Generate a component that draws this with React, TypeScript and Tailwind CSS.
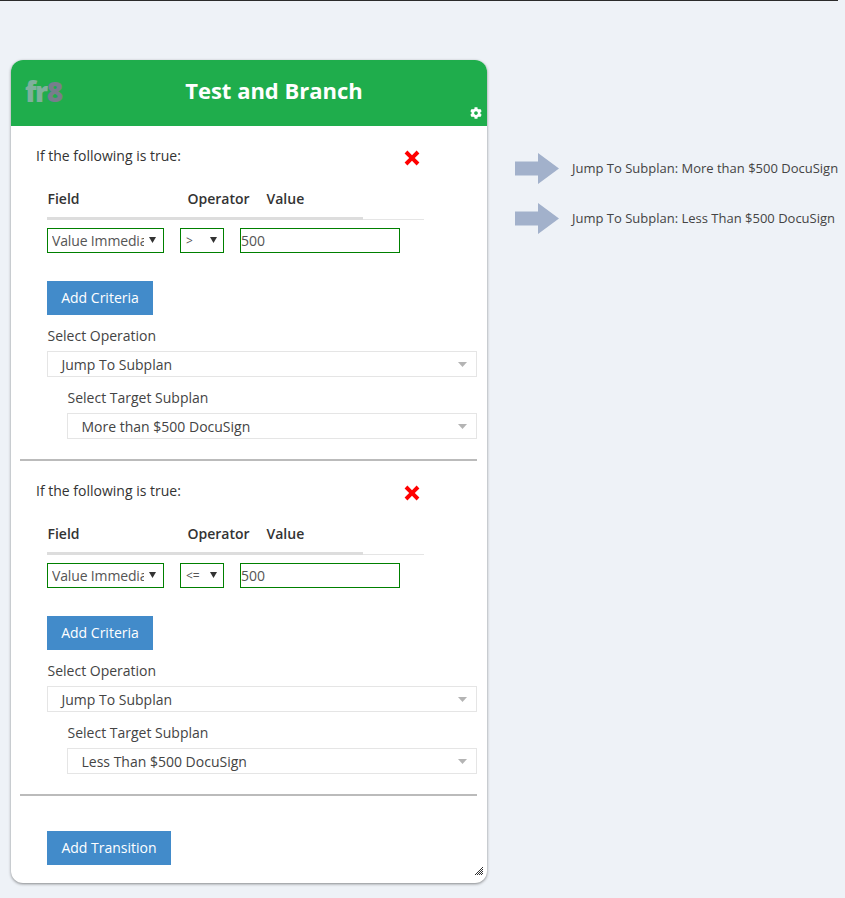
import React from "react";
import { FaCog } from "react-icons/fa";

const Caret = () => (
  <svg width="7" height="6" viewBox="0 0 7 6" className="shrink-0 mb-[2px]">
    <path d="M0 0H7L3.5 6Z" fill="#333" />
  </svg>
);

const BoxSelect = ({ label, indent }: { label: string; indent?: boolean }) => (
  <div className={`h-[26px] border border-[#e5e5e5] bg-white flex items-center justify-between pl-[13.5px] pr-[9px] text-[14px] text-[#444] ${indent ? "ml-5" : ""}`}>
    <span>{label}</span>
    <svg width="9" height="5" viewBox="0 0 9 5"><path d="M0 0H9L4.5 5Z" fill="#b4b4b4" /></svg>
  </div>
);

const Section = ({ op, target }: { op: string; target: string }) => (
  <section className="border-b-2 border-[#bbbbbb] ml-[9px] mr-[10px] h-[335px]">
    <div className="flex items-start pl-4 pt-5 h-[54px] relative">
      <span className="text-[14px] leading-5 text-[#333]">If the following is true:</span>
      <svg width="16" height="16" viewBox="0 0 16 16" className="absolute left-[383.5px] top-[24px]">
        <path d="M3.4 0.6L8 5.2L12.6 0.6L15.4 3.4L10.8 8L15.4 12.6L12.6 15.4L8 10.8L3.4 15.4L0.6 12.6L5.2 8L0.6 3.4Z" fill="#ff0000" />
      </svg>
    </div>
    <div className="ml-[27px] w-[377px] h-[40px] border-b border-[#e5e5e5] relative">
      <div className="flex h-[36px] items-center text-[14px] font-semibold text-[#333] pl-[0.5px]">
        <span className="w-[140px]">Field</span>
        <span className="w-[79px]">Operator</span>
        <span>Value</span>
      </div>
      <div className="absolute left-0 bottom-[-1px] w-[316px] h-[3px] bg-[#dddddd]" />
    </div>
    <div className="ml-[27px] mt-2 flex text-[14px] text-[#555]">
      <div className="w-[117px] h-[25px] border border-[#008000] bg-white flex items-center pl-[4px] pr-[6px] gap-[5px]">
        <span className="w-[92px] overflow-hidden whitespace-nowrap tracking-[-0.15px]">Value Immediate</span>
        <Caret />
      </div>
      <div className="ml-4 w-[44px] h-[25px] border border-[#008000] bg-white flex items-center justify-between pl-[5px] pr-[6px] text-[12px]">
        <span>{op}</span>
        <Caret />
      </div>
      <div className="ml-4 w-[160px] h-[25px] border border-[#008000] bg-white flex items-center">500</div>
    </div>
    <button className="ml-[27px] mt-[28px] block h-[34px] w-[106px] pb-[2px] bg-[#428bca] text-white text-[14px]">Add Criteria</button>
    <div className="ml-[27px] w-[430px]">
      <div className="mt-[11px] h-5 leading-5 text-[14px] text-[#444] pl-[0.5px]">Select Operation</div>
      <div className="mt-[5px]"><BoxSelect label="Jump To Subplan" /></div>
      <div className="mt-[11px] ml-5 h-5 leading-5 text-[14px] text-[#444] pl-[0.5px]">Select Target Subplan</div>
      <div className="mt-[5px]"><BoxSelect label={target} indent /></div>
    </div>
  </section>
);

const Arrow = () => (
  <svg width="44" height="31" viewBox="0 0 44 31" className="shrink-0">
    <path d="M0 8.5H23V0L44 15.5L23 31V22.5H0Z" fill="#a2b1cb" />
  </svg>
);

export default function App() {
  return (
    <div className="h-[898px] w-[845px] overflow-hidden bg-[#eef2f7] [font-family:'Open_Sans',sans-serif]">
      <div className="h-px w-[838px] bg-[#2b2b2b]" />
      <div className="flex pl-[11px] pt-[59px]">
        <div className="relative w-[476px] h-[823px] rounded-[12px] bg-white shadow-[0_1px_3px_rgba(0,0,0,0.45)]">
          <header className="relative h-[66px] rounded-t-[12px] bg-[#1fad4c] flex items-center justify-center pl-[50px]">
            <span className="absolute left-[14px] top-[13px] text-[28px] leading-[36px] font-extrabold tracking-[-1.5px]">
              <span className="text-[#7fb09c]">fr</span><span className="text-[#787d8c]">8</span>
            </span>
            <h1 className="text-[22px] font-bold text-white leading-[30px] mb-[7px]">Test and Branch</h1>
            <FaCog className="absolute right-[5px] bottom-[7px] text-white" size={12} />
          </header>
          <Section op=">" target="More than $500 DocuSign" />
          <Section op="<=" target="Less Than $500 DocuSign" />
          <button className="ml-9 mt-[35px] block h-[34px] w-[124px] pb-[2px] bg-[#428bca] text-white text-[14px]">Add Transition</button>
          <svg width="8" height="8" viewBox="0 0 8 8" className="absolute right-[4px] bottom-[8px]">
            <path d="M0 8L8 0M2 8L8 2M4 8L8 4M6 8L8 6" stroke="#333" strokeWidth="1" fill="none" />
          </svg>
        </div>
        <div className="ml-[28px] pt-[93px] flex flex-col gap-[19px]">
          {["Jump To Subplan: More than $500 DocuSign", "Jump To Subplan: Less Than $500 DocuSign"].map((t) => (
            <div key={t} className="flex items-center h-[31px] gap-[13px] whitespace-nowrap text-[13px] text-[#444]">
              <Arrow />
              <span>{t}</span>
            </div>
          ))}
        </div>
      </div>
    </div>
  );
}
